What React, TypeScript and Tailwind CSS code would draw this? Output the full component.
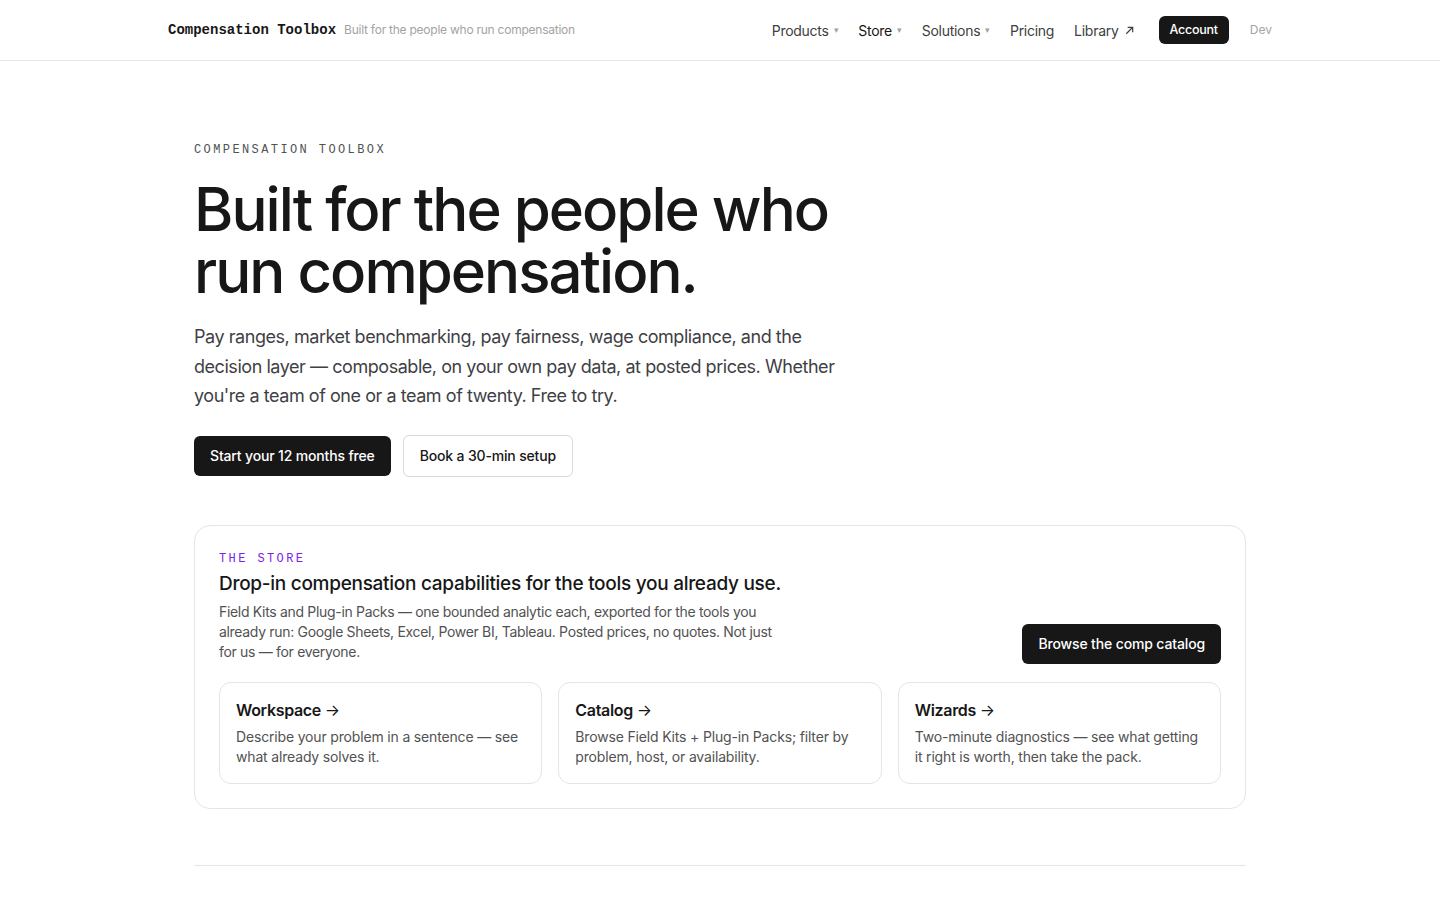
type NavItem = {
  label: string;
  menu?: boolean;
  external?: boolean;
  active?: boolean;
};

type StoreLink = {
  title: string;
  body: string;
};

const navItems: NavItem[] = [
  { label: "Products", menu: true },
  { label: "Store", menu: true, active: true },
  { label: "Solutions", menu: true },
  { label: "Pricing" },
  { label: "Library", external: true },
];

const storeLinks: StoreLink[] = [
  {
    title: "Workspace",
    body: "Describe your problem in a sentence — see what already solves it.",
  },
  {
    title: "Catalog",
    body: "Browse Field Kits + Plug-in Packs; filter by problem, host, or availability.",
  },
  {
    title: "Wizards",
    body: "Two-minute diagnostics — see what getting it right is worth, then take the pack.",
  },
];

const sans = "font-['Inter',_'Liberation_Sans',_sans-serif]";
const mono = "font-['Liberation_Mono',_'DejaVu_Sans_Mono',_monospace]";

function Header() {
  return (
    <header className="h-[61px] border-b border-[#e7e7e7] bg-white">
      <div className="mx-auto flex h-full max-w-[1104px] items-center justify-between">
        <div className="flex items-baseline gap-2">
          <span className={`${mono} text-[14px] font-bold text-[#171717]`}>
            Compensation Toolbox
          </span>
          <span className="text-[12px] tracking-[-0.02em] text-[#a3a3a3]">
            Built for the people who run compensation
          </span>
        </div>
        <nav className="flex items-center text-[14px] tracking-[-0.02em]">
          {navItems.map((item) => (
            <a
              key={item.label}
              href="#"
              className={`mr-5 flex items-center gap-[5px] ${
                item.active ? "text-[#171717]" : "text-[#404040]"
              }`}
            >
              <span>{item.label}</span>
              {item.menu && <span className="text-[9px] text-[#a3a3a3]">▾</span>}
              {item.external && (
                <svg width="11" height="11" viewBox="0 0 12 12" fill="none" stroke="currentColor" strokeWidth="1.3">
                  <path d="M2.5 9.5 L9.5 2.5 M4 2.5 H9.5 V8" />
                </svg>
              )}
            </a>
          ))}
          <a
            href="#"
            className="ml-1 flex h-[28px] items-center rounded-md bg-[#171717] px-[11px] text-[12.5px] font-medium tracking-[-0.02em] text-white"
          >
            Account
          </a>
          <span className="ml-[21px] text-[12px] tracking-normal text-[#a3a3a3]">Dev</span>
        </nav>
      </div>
    </header>
  );
}

function Hero() {
  return (
    <section className="pt-[80px]">
      <p className={`${mono} text-[12px] uppercase tracking-[0.2em] text-[#525252]`}>
        Compensation Toolbox
      </p>
      <h1 className="mt-[19px] text-[60px] font-medium leading-[62px] tracking-[-0.033em] text-[#171717]">
        Built for the people who
        <br />
        run compensation.
      </h1>
      <p className="mt-[20px] max-w-[660px] text-[18px] leading-[29.5px] tracking-[-0.025em] text-[#3f3f46]">
        Pay ranges, market benchmarking, pay fairness, wage compliance, and the decision layer — composable,
        on your own pay data, at posted prices. Whether you're a team of one or a team of twenty. Free to try.
      </p>
      <div className="mt-[24px] flex gap-3 tracking-[-0.01em]">
        <a
          href="#"
          className="mt-px flex h-[40px] items-center rounded-md bg-[#171717] px-4 text-[14px] font-medium text-white"
        >
          Start your 12 months free
        </a>
        <a
          href="#"
          className="flex h-[42px] items-center rounded-md border border-[#d9d9d9] bg-white px-4 text-[14px] font-medium text-[#171717]"
        >
          Book a 30-min setup
        </a>
      </div>
    </section>
  );
}

function StoreCard() {
  return (
    <section className="mt-[48px] rounded-2xl border border-[#e5e5e5] bg-white px-6 pb-6 pt-[24px] tracking-[-0.02em]">
      <div className="flex items-end justify-between gap-8">
        <div>
          <p className={`${mono} text-[12px] uppercase tracking-[0.2em] text-[#7c22e6]`}>The Store</p>
          <h2 className="mt-[2px] text-[19px] font-medium leading-[28px] tracking-[-0.015em] text-[#171717]">
            Drop-in compensation capabilities for the tools you already use.
          </h2>
          <p className="mt-[4px] max-w-[565px] text-[14px] leading-[20px] text-[#525252]">
            Field Kits and Plug-in Packs — one bounded analytic each, exported for the tools you already run:
            Google Sheets, Excel, Power BI, Tableau. Posted prices, no quotes. Not just for us — for everyone.
          </p>
        </div>
        <a
          href="#"
          className="mb-[-2px] flex h-[40px] shrink-0 items-center rounded-md bg-[#171717] px-4 text-[14px] font-medium tracking-[-0.01em] text-white"
        >
          Browse the comp catalog
        </a>
      </div>
      <div className="mt-[20px] grid grid-cols-3 gap-4">
        {storeLinks.map((link) => (
          <a key={link.title} href="#" className="rounded-xl border border-[#e5e5e5] px-4 pb-4 pt-4">
            <div className="text-[16px] font-semibold leading-[22px] text-[#171717]">
              {link.title} <span className="font-normal">→</span>
            </div>
            <p className="mt-[6px] text-[14px] leading-[20px] tracking-[-0.012em] text-[#525252]">
              {link.body}
            </p>
          </a>
        ))}
      </div>
    </section>
  );
}

export default function App() {
  return (
    <div className={`${sans} min-h-[900px] bg-white antialiased`}>
      <Header />
      <main className="mx-auto max-w-[1052px]">
        <Hero />
        <StoreCard />
        <div className="mt-[56px] border-t border-[#e5e5e5]" />
      </main>
    </div>
  );
}
